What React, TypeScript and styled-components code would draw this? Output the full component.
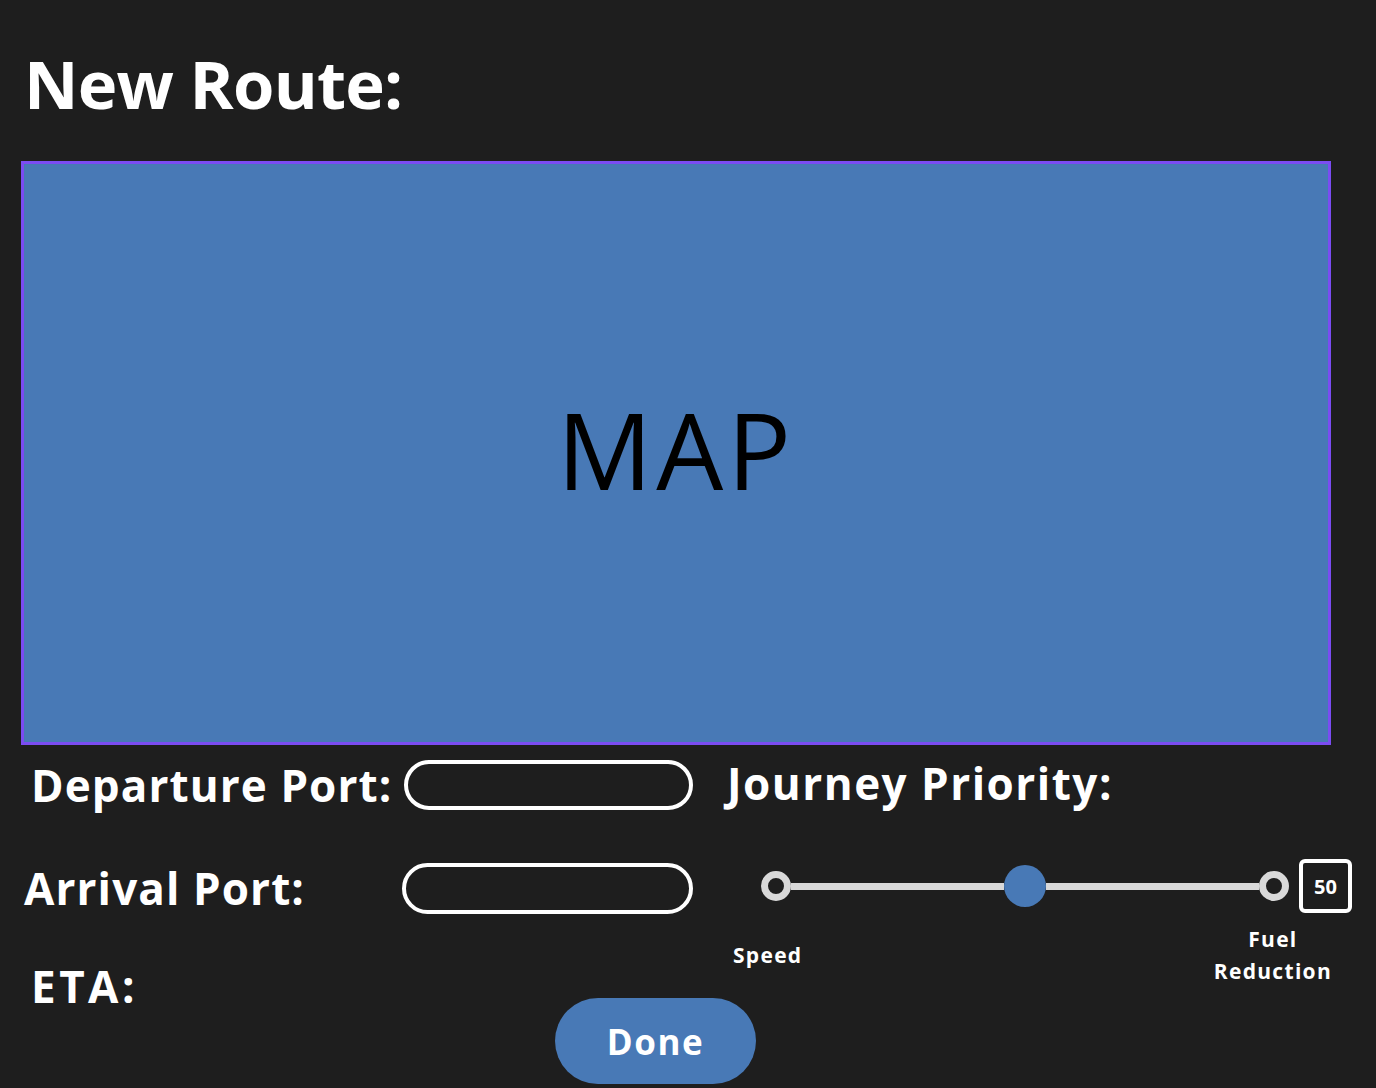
import React from "react";
import styled, { createGlobalStyle } from "styled-components";

const Global = createGlobalStyle`
  html, body { margin: 0; padding: 0; background: #1e1e1e; }
  body { font-family: "Open Sans", "Lato", sans-serif; color: #ffffff; }
  * { box-sizing: border-box; }
`;

const Page = styled.div`
  width: 1376px;
  height: 1088px;
  background: #1e1e1e;
  display: flex;
  flex-direction: column;
  overflow: hidden;
`;

const Title = styled.h1`
  margin: 43px 0 0 24px;
  font-size: 67px;
  line-height: 80px;
  font-weight: 700;
  letter-spacing: -0.8px;
  color: #ffffff;
`;

const MapBox = styled.div`
  margin: 38px 0 0 21px;
  width: 1310px;
  height: 584px;
  background: #4879b6;
  border: 3px solid #7b4cf2;
  display: flex;
  align-items: center;
  justify-content: center;
`;

const MapLabel = styled.span`
  font-family: "Open Sans", sans-serif;
  font-size: 106px;
  font-weight: 400;
  color: #000000;
  letter-spacing: 4px;
  margin-top: -8px;
`;

const Bottom = styled.div`
  display: grid;
  grid-template-columns: 700px 1fr;
`;

const LeftCol = styled.div`
  display: flex;
  flex-direction: column;
`;

const FieldRow = styled.div<{ $indent: number; $height: number }>`
  display: flex;
  align-items: center;
  height: ${(p) => p.$height}px;
  padding-left: ${(p) => p.$indent}px;
`;

const Label = styled.span<{ $width?: number; $spacing?: number }>`
  font-size: 44px;
  font-weight: 700;
  color: #ffffff;
  letter-spacing: ${(p) => p.$spacing ?? 1.1}px;
  width: ${(p) => (p.$width ? `${p.$width}px` : "auto")};
  white-space: nowrap;
`;

const PillInput = styled.div<{ $w: number; $h: number }>`
  width: ${(p) => p.$w}px;
  height: ${(p) => p.$h}px;
  border: 4px solid #ffffff;
  border-radius: 999px;
`;

const RightCol = styled.div`
  display: flex;
  flex-direction: column;
  padding-left: 27px;
  padding-top: 12px;
`;

const PriorityTitle = styled.div`
  height: 52px;
  display: flex;
  align-items: center;
  font-size: 44px;
  font-weight: 700;
  letter-spacing: 1.5px;
  color: #ffffff;
  white-space: nowrap;
`;

const SliderRow = styled.div`
  display: flex;
  align-items: center;
  margin-top: 50px;
  padding-left: 34px;
`;

const EndDot = styled.div`
  width: 30px;
  height: 30px;
  border-radius: 50%;
  border: 7px solid #d9d9d9;
  background: #1e1e1e;
  flex: none;
`;

const Track = styled.div`
  height: 7px;
  background: #d9d9d9;
  flex: 1;
`;

const Knob = styled.div`
  width: 42px;
  height: 42px;
  border-radius: 50%;
  background: #4879b6;
  flex: none;
`;

const SliderTrack = styled.div`
  display: flex;
  align-items: center;
  width: 528px;
`;

const ValueBox = styled.div`
  margin-left: 10px;
  width: 53px;
  height: 54px;
  border: 4px solid #ffffff;
  border-radius: 6px;
  display: flex;
  align-items: center;
  justify-content: center;
  font-size: 20px;
  font-weight: 700;
  color: #ffffff;
`;

const EndLabels = styled.div`
  display: flex;
  justify-content: space-between;
  width: 605px;
  margin-top: 8px;
  padding-left: 6px;
`;

const SmallLabel = styled.div<{ $top: number }>`
  font-size: 21px;
  font-weight: 700;
  line-height: 32px;
  letter-spacing: 1.3px;
  color: #ffffff;
  text-align: center;
  margin-top: ${(p) => p.$top}px;
`;

const DoneButton = styled.button`
  margin: -23px 0 0 555px;
  width: 201px;
  height: 86px;
  border: none;
  border-radius: 43px;
  background: #4879b6;
  color: #ffffff;
  font-family: "Open Sans", sans-serif;
  font-size: 35px;
  font-weight: 700;
  letter-spacing: 1.5px;
  display: flex;
  align-items: center;
  justify-content: center;
  cursor: pointer;
`;

export default function App() {
  return (
    <>
      <Global />
      <Page>
        <Title>New Route:</Title>
        <MapBox>
          <MapLabel>MAP</MapLabel>
        </MapBox>
        <Bottom>
          <LeftCol>
            <FieldRow $indent={31} $height={80}>
              <Label $width={373}>Departure Port:</Label>
              <PillInput $w={289} $h={50} />
            </FieldRow>
            <FieldRow $indent={24} $height={126}>
              <Label $width={378}>Arrival Port:</Label>
              <PillInput $w={291} $h={51} />
            </FieldRow>
            <FieldRow $indent={31} $height={70}>
              <Label $spacing={3.5}>ETA:</Label>
            </FieldRow>
          </LeftCol>
          <RightCol>
            <PriorityTitle>Journey Priority:</PriorityTitle>
            <SliderRow>
              <SliderTrack>
                <EndDot />
                <Track />
                <Knob />
                <Track />
                <EndDot />
              </SliderTrack>
              <ValueBox>50</ValueBox>
            </SliderRow>
            <EndLabels>
              <SmallLabel $top={18}>Speed</SmallLabel>
              <SmallLabel $top={2}>
                Fuel
                <br />
                Reduction
              </SmallLabel>
            </EndLabels>
          </RightCol>
        </Bottom>
        <DoneButton>Done</DoneButton>
      </Page>
    </>
  );
}
